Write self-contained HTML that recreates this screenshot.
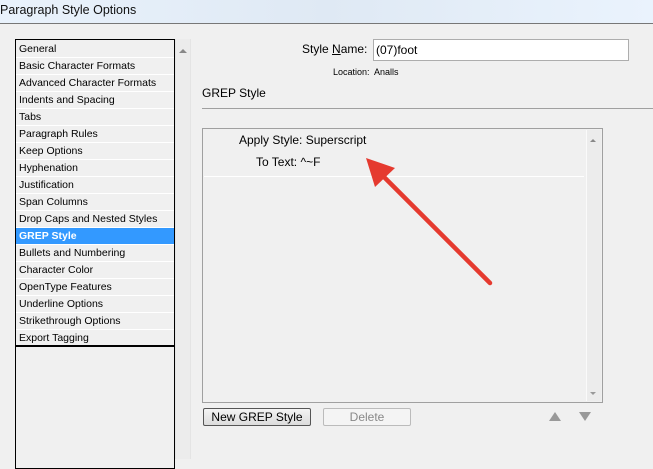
<!DOCTYPE html>
<html><head><meta charset="utf-8"><style>
*{margin:0;padding:0;box-sizing:border-box}
body{width:653px;height:453px;overflow:hidden;background:#f0f0f0;font-family:"Liberation Sans",Tahoma,sans-serif;position:relative;color:#000}
.abs{position:absolute}
#title{left:0;top:0;width:653px;height:24px;background:linear-gradient(90deg,#e9f2fc,#dfe9f4 50%,#eaf3fd);border-bottom:1px solid #777;font-size:12.5px;padding:3px 0 0 0;color:#111}
#list{left:15px;top:39px;width:160px;height:430px;border:1px solid #000;background:#f0f0f0;padding-top:1px}
.it{height:17px;border-bottom:1px solid #fff;font-size:10.5px;line-height:16px;padding-left:3px;white-space:nowrap}
.sel{background:#3399ff;color:#fff;font-weight:bold}
#lsb{left:175px;top:39px;width:16px;height:420px;background:#ececec;border-left:1px solid #e4e4e4;border-right:1px solid #e4e4e4}
.tri-up{width:0;height:0;border-left:4px solid transparent;border-right:4px solid transparent;border-bottom:4px solid #888}
.tri-dn{width:0;height:0;border-left:4px solid transparent;border-right:4px solid transparent;border-top:4px solid #888}
</style></head><body>
<div id="title" class="abs">Paragraph Style Options</div>
<div id="list" class="abs">
<div class="it">General</div><div class="it">Basic Character Formats</div><div class="it">Advanced Character Formats</div><div class="it">Indents and Spacing</div><div class="it">Tabs</div><div class="it">Paragraph Rules</div><div class="it">Keep Options</div><div class="it">Hyphenation</div><div class="it">Justification</div><div class="it">Span Columns</div><div class="it">Drop Caps and Nested Styles</div><div class="it sel">GREP Style</div><div class="it">Bullets and Numbering</div><div class="it">Character Color</div><div class="it">OpenType Features</div><div class="it">Underline Options</div><div class="it">Strikethrough Options</div><div class="it" style="border-bottom:2px solid #000">Export Tagging</div>
</div>
<div id="lsb" class="abs"><div class="tri-up" style="margin:10px 0 0 3px"></div></div>

<div class="abs" style="left:302px;top:42px;font-size:12px">Style <u>N</u>ame:</div>
<div class="abs" style="left:373px;top:39px;width:256px;height:22px;background:#fff;border:1px solid #adadad;font-size:12px;padding:3px 0 0 2px">(07)foot</div>
<div class="abs" style="left:333px;top:67px;font-size:9px">Location:&nbsp; Analls</div>
<div class="abs" style="left:202px;top:86px;font-size:12px">GREP Style</div>
<div class="abs" style="left:202px;top:108px;width:451px;height:1px;background:#a0a0a0"></div>

<div class="abs" style="left:202px;top:128px;width:401px;height:275px;border:1px solid #a0a0a0;background:#f0f0f0">
<div class="abs" style="left:36px;top:4px;font-size:12px">Apply Style: Superscript</div>
<div class="abs" style="left:53px;top:26px;font-size:12px">To Text: ^~F</div>
<div class="abs" style="left:1px;top:47px;width:380px;height:1px;background:#fff"></div>
<div class="abs" style="left:383px;top:1px;width:15px;height:271px;background:#ececec;border-left:1px solid #fafafa">
<div class="tri-up" style="margin:9px 0 0 3px;border-left-width:3px;border-right-width:3px;border-bottom-width:3px"></div>
<div class="tri-dn abs" style="left:3px;bottom:6px;border-left-width:3px;border-right-width:3px;border-top-width:3px;border-top-color:#999"></div>
</div>
</div>

<div class="abs" style="left:203px;top:408px;width:108px;height:18px;border:1px solid #555;border-radius:2px;background:linear-gradient(#f4f4f4,#dcdcdc);font-size:12px;text-align:center;line-height:16px">New GREP Style</div>
<div class="abs" style="left:323px;top:408px;width:88px;height:18px;border:1px solid #bbb;border-radius:2px;background:#f4f4f4;font-size:12px;text-align:center;line-height:16px;color:#888">Delete</div>
<div class="abs tri-up" style="left:549px;top:412px;border-left-width:6px;border-right-width:6px;border-bottom-width:9px;border-bottom-color:#999"></div>
<div class="abs tri-dn" style="left:579px;top:412px;border-left-width:6px;border-right-width:6px;border-top-width:9px;border-top-color:#999"></div>

<svg class="abs" style="left:0;top:0" width="653" height="453">
<line x1="490" y1="283" x2="383" y2="176" stroke="#e53a2f" stroke-width="4.5" stroke-linecap="round"/>
<polygon points="366,158 395,168 375,187" fill="#e53a2f"/>
</svg>
</body></html>
